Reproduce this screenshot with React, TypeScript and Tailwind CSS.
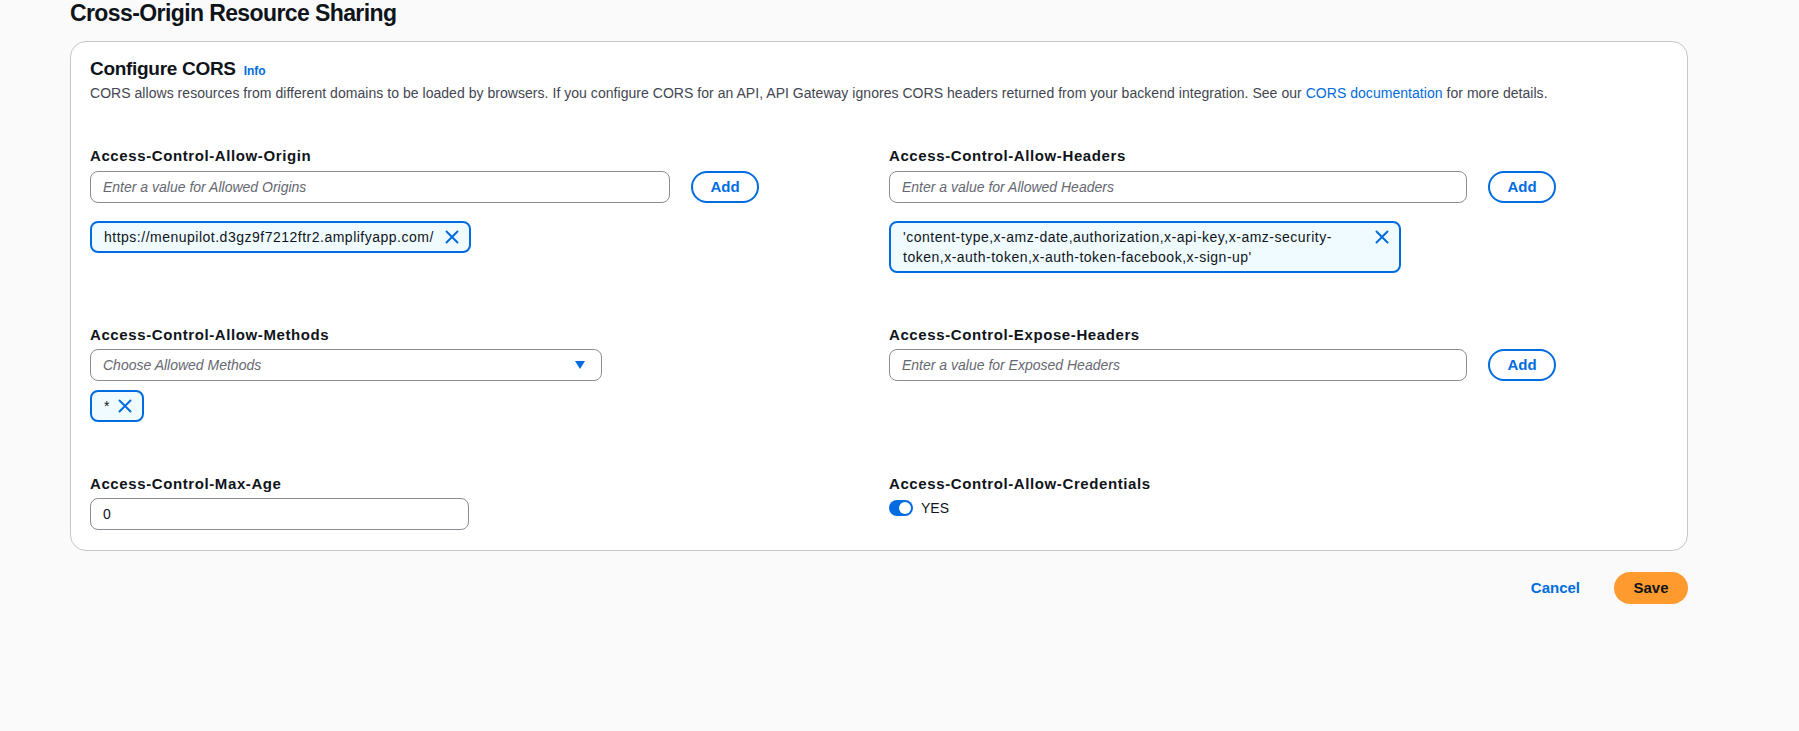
import React from 'react';

const font = { fontFamily: '"Liberation Sans", Arial, sans-serif' };

const XIcon: React.FC = () => (
  <svg width="16" height="16" viewBox="0 0 16 16" fill="none" className="shrink-0">
    <path d="M2.5 2.5l11 11M13.5 2.5l-11 11" stroke="#006ce0" strokeWidth="2" strokeLinecap="round" />
  </svg>
);

const Label: React.FC<{ children: React.ReactNode }> = ({ children }) => (
  <div className="text-[15px] leading-[20px] tracking-[0.6px] font-bold text-[#0f141a]">{children}</div>
);

const TextInput: React.FC<{ placeholder?: string; value?: string; width: string }> = ({
  placeholder,
  value,
  width,
}) => (
  <div
    className={`${width} h-[32px] rounded-[8px] border border-[#8c8c94] bg-white px-[12px] flex items-center text-[14px]`}
  >
    {value ? (
      <span className="text-[#0f141a]">{value}</span>
    ) : (
      <span className="italic text-[#656871]">{placeholder}</span>
    )}
  </div>
);

const AddButton: React.FC = () => (
  <button className="w-[68px] h-[32px] rounded-full border-2 border-[#006ce0] text-[#006ce0] text-[15px] font-bold bg-white">
    Add
  </button>
);

const Token: React.FC<{ children: React.ReactNode; className?: string }> = ({ children, className }) => (
  <div
    className={`inline-flex items-start rounded-[8px] border-2 border-[#006ce0] bg-[#f0fbff] pl-[12px] pr-[9px] py-[4px] text-[14px] leading-[20px] tracking-[0.5px] text-[#0f141a] ${className ?? 'gap-[10px]'}`}
  >
    <span>{children}</span>
    <span className="pt-[2px]">
      <XIcon />
    </span>
  </div>
);

export default function App() {
  return (
    <div className="min-h-screen bg-[#fafafa] pl-[70px]" style={font}>
      <div className="w-[1618px]">
        <h1 className="text-[23px] leading-[26px] tracking-[-0.6px] font-bold text-[#0f141a] mb-[15px]">
          Cross-Origin Resource Sharing
        </h1>

        <div className="rounded-[16px] border border-[#c6c6cd] bg-white px-[19px] pt-[15px] pb-[20px]">
          <div className="flex items-baseline gap-[8px]">
            <h2 className="text-[19px] leading-[24px] tracking-[-0.3px] font-bold text-[#0f141a]">
              Configure CORS
            </h2>
            <a className="text-[12px] font-bold text-[#006ce0]">Info</a>
          </div>
          <p className="mt-[2px] text-[14px] leading-[20px] tracking-[0.04px] text-[#424650]">
            CORS allows resources from different domains to be loaded by browsers. If you configure CORS for an API,
            API Gateway ignores CORS headers returned from your backend integration. See our{' '}
            <a className="text-[#006ce0]">CORS documentation</a> for more details.
          </p>

          <div className="mt-[43px] grid grid-cols-2 gap-x-[20px] gap-y-[52px]">
            {/* Allow-Origin */}
            <div>
              <Label>Access-Control-Allow-Origin</Label>
              <div className="mt-[5px] flex items-center gap-[21px]">
                <TextInput width="w-[580px]" placeholder="Enter a value for Allowed Origins" />
                <AddButton />
              </div>
              <div className="mt-[18px]">
                <Token>https://menupilot.d3gz9f7212ftr2.amplifyapp.com/</Token>
              </div>
            </div>

            {/* Allow-Headers */}
            <div>
              <Label>Access-Control-Allow-Headers</Label>
              <div className="mt-[5px] flex items-center gap-[21px]">
                <TextInput width="w-[578px]" placeholder="Enter a value for Allowed Headers" />
                <AddButton />
              </div>
              <div className="mt-[18px]">
                <Token className="w-[512px] justify-between gap-[10px]">
                  'content-type,x-amz-date,authorization,x-api-key,x-amz-security-token,x-auth-token,x-auth-token-facebook,x-sign-up'
                </Token>
              </div>
            </div>

            {/* Allow-Methods */}
            <div>
              <Label>Access-Control-Allow-Methods</Label>
              <div className="mt-[4px] w-[512px] h-[32px] rounded-[8px] border border-[#8c8c94] bg-white pl-[12px] pr-[16px] flex items-center justify-between text-[14px]">
                <span className="italic text-[#656871]">Choose Allowed Methods</span>
                <svg width="10" height="8" viewBox="0 0 10 8">
                  <path d="M0 0h10L5 8z" fill="#006ce0" />
                </svg>
              </div>
              <div className="mt-[9px]">
                <Token className="gap-[7px]">*</Token>
              </div>
            </div>

            {/* Expose-Headers */}
            <div>
              <Label>Access-Control-Expose-Headers</Label>
              <div className="mt-[4px] flex items-center gap-[21px]">
                <TextInput width="w-[578px]" placeholder="Enter a value for Exposed Headers" />
                <AddButton />
              </div>
            </div>

            {/* Max-Age */}
            <div>
              <Label>Access-Control-Max-Age</Label>
              <div className="mt-[4px]">
                <TextInput width="w-[379px]" value="0" />
              </div>
            </div>

            {/* Credentials */}
            <div>
              <Label>Access-Control-Allow-Credentials</Label>
              <div className="mt-[4px] flex items-center gap-[8px]">
                <div className="w-[24px] h-[16px] rounded-full bg-[#006ce0] flex items-center justify-end pr-[2px]">
                  <div className="w-[12px] h-[12px] rounded-full bg-white" />
                </div>
                <span className="text-[14px] leading-[20px] text-[#0f141a]">YES</span>
              </div>
            </div>
          </div>
        </div>

        <div className="mt-[21px] flex justify-end items-center gap-[14px]">
          <button className="px-[20px] h-[32px] text-[15px] font-bold text-[#006ce0]">Cancel</button>
          <button className="w-[74px] h-[32px] rounded-full bg-[#ff9a2e] text-[15px] font-bold text-[#0f141a]">
            Save
          </button>
        </div>
      </div>
    </div>
  );
}
